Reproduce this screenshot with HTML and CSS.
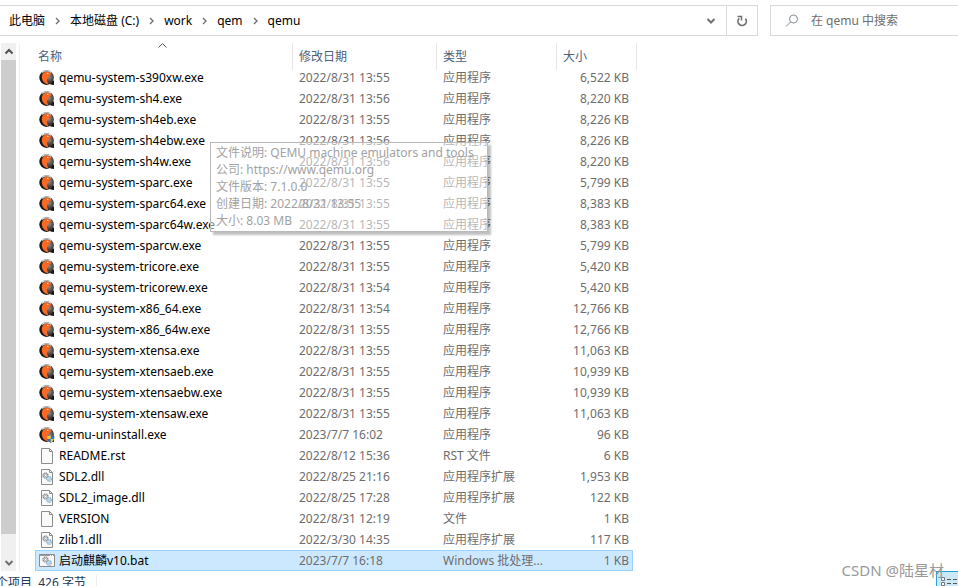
FILE: index.html
```html
<!DOCTYPE html>
<html lang="zh-CN">
<head>
<meta charset="utf-8">
<title>qemu</title>
<link rel="stylesheet" href="styles.css">
</head>
<body>
<svg class="symbols" aria-hidden="true">
  <defs>
    <radialGradient id="ball" cx=".65" cy=".45" r=".6"><stop offset="0" stop-color="#96908d"/><stop offset=".5" stop-color="#4d4846"/><stop offset="1" stop-color="#151313"/></radialGradient>
    <symbol id="qemu" viewBox="0 0 16 16">
      <path d="M10 10.5h5v4.500l-3.500-.5z" fill="#171515"/>
      <circle cx="7.600" cy="7.600" r="7.300" fill="url(#ball)"/>
      <path d="M3 2.400Q7.500-.8 12.200 2.400" fill="none" stroke="#d9d6d4" stroke-width="1.300"/>
      <path d="M3.600 4C5 1.500 8.800 1 10.400 2.600L13 4.300l-2.800.6C10.500 7 8.400 7.800 8 9.600c-.2 1.600.6 3 1.500 4.600C6 13.800 3.800 11.900 3.200 9.200 2.700 7 2.800 5.500 3.600 4z" fill="#fa6a24"/>
      <circle cx="8.800" cy="3.400" r=".6" fill="#fff"/>
    </symbol>
    <symbol id="uninstall" viewBox="0 0 16 16">
      <use href="#qemu"/>
      <path d="M8 9q2.200 0 3.700-1 1.500 1 3.800 1 0 5-3.800 7Q8 14 8 9z" fill="#2676c4"/>
      <path d="M11.700 8v4H8.300Q8 11 8 9q2.200 0 3.700-1zM11.700 12h3.300q-.8 2.700-3.300 4z" fill="#f6c63a"/>
    </symbol>
    <symbol id="page" viewBox="0 0 16 16">
      <path d="M2.500.5h8l3 3v12h-11z" fill="#fafafa" stroke="#8c8c8c"/>
      <path d="M10.500.5v3h3" fill="none" stroke="#8c8c8c"/>
    </symbol>
    <symbol id="gears" viewBox="0 0 16 16">
      <circle cx="6.500" cy="6.500" r="2.400" fill="#eee" stroke="#858b90" stroke-width="1.500" stroke-dasharray="1.200 .5"/>
      <circle cx="6.500" cy="6.500" r="1" fill="#fff" stroke="#858b90" stroke-width=".6"/>
      <circle cx="10" cy="10" r="2.200" fill="#e4f2fb" stroke="#7fa9c6" stroke-width="1.400" stroke-dasharray="1.200 .5"/>
      <circle cx="10" cy="10" r=".8" fill="#fff" stroke="#7fa9c6" stroke-width=".5"/>
    </symbol>
    <symbol id="dll" viewBox="0 0 16 16"><use href="#page"/><use href="#gears"/></symbol>
    <symbol id="bat" viewBox="0 0 16 16">
      <path d="M.5 1.500h15v12H.5z" fill="#f7f7f7" stroke="#8c8c8c"/>
      <path d="M1 2.500h14" stroke="#9a9a9a"/>
      <path d="M11 2.500h1m1 0h1" stroke="#fff"/>
      <use href="#gears"/>
    </symbol>
    <symbol id="next" viewBox="0 0 7 8"><path d="M2 1l3 3-3 3" fill="none" stroke="#707070" stroke-width="1.400"/></symbol>
    <symbol id="up" viewBox="0 0 10 8"><path d="M1.500 5.500L5 2l3.500 3.500" fill="none" stroke="#505050" stroke-width="2"/></symbol>
    <symbol id="down" viewBox="0 0 10 8"><path d="M1.500 2L5 5.500 8.500 2" fill="none" stroke="#707070" stroke-width="2"/></symbol>
  </defs>
</svg>

<header class="toolbar">
  <div class="address">
    <nav class="crumbs" aria-label="路径">
      <a href="#">此电脑</a><svg class="next"><use href="#next"/></svg>
      <a href="#">本地磁盘 (C:)</a><svg class="next"><use href="#next"/></svg>
      <a href="#">work</a><svg class="next"><use href="#next"/></svg>
      <a href="#">qem</a><svg class="next"><use href="#next"/></svg>
      <a href="#">qemu</a>
    </nav>
    <button class="tool history" type="button" aria-label="历史"><svg class="arrow"><use href="#down"/></svg></button>
    <button class="tool refresh" type="button" aria-label="刷新">
      <svg class="reload" viewBox="0 0 12 12"><path d="M9.400 3.600A4.200 4.200 0 1 1 3.200 3.300" fill="none" stroke="#707070" stroke-width="1.700"/><path d="M1.500 1.500H5.500V5.500" fill="none" stroke="#707070" stroke-width="1.500"/></svg>
    </button>
  </div>
  <label class="search">
    <svg class="lens" viewBox="0 0 14 14"><circle cx="8.500" cy="5" r="4" fill="none" stroke="#858b95"/><path d="M5.500 8L1 12.500" stroke="#858b95"/></svg>
    <input type="text" placeholder="在 qemu 中搜索" aria-label="搜索">
  </label>
</header>

<main class="browser">
  <div class="scrollbar">
    <button type="button" aria-label="向上"><svg class="arrow"><use href="#up"/></svg></button>
    <div class="track"><div class="thumb"></div></div>
    <button type="button" aria-label="向下"><svg class="arrow"><use href="#down"/></svg></button>
  </div>
  <div class="list">
    <table class="files">
      <colgroup><col class="c-name"><col class="c-date"><col class="c-type"><col class="c-size"><col class="c-end"></colgroup>
      <thead>
        <tr><th>名称<svg class="sort" viewBox="0 0 9 5"><path d="M.5 4.500l4-4 4 4" fill="none" stroke="#555"/></svg></th><th>修改日期</th><th>类型</th><th colspan="2">大小</th></tr>
      </thead>
      <tbody>
        <tr><td><svg><use href="#qemu"/></svg>qemu-system-s390xw.exe</td><td>2022/8/31 13:55</td><td>应用程序</td><td>6,522 KB</td></tr>
        <tr><td><svg><use href="#qemu"/></svg>qemu-system-sh4.exe</td><td>2022/8/31 13:56</td><td>应用程序</td><td>8,220 KB</td></tr>
        <tr><td><svg><use href="#qemu"/></svg>qemu-system-sh4eb.exe</td><td>2022/8/31 13:55</td><td>应用程序</td><td>8,226 KB</td></tr>
        <tr><td><svg><use href="#qemu"/></svg>qemu-system-sh4ebw.exe</td><td>2022/8/31 13:56</td><td>应用程序</td><td>8,226 KB</td></tr>
        <tr><td><svg><use href="#qemu"/></svg>qemu-system-sh4w.exe</td><td>2022/8/31 13:56</td><td>应用程序</td><td>8,220 KB</td></tr>
        <tr><td><svg><use href="#qemu"/></svg>qemu-system-sparc.exe</td><td>2022/8/31 13:55</td><td>应用程序</td><td>5,799 KB</td></tr>
        <tr><td><svg><use href="#qemu"/></svg>qemu-system-sparc64.exe</td><td>2022/8/31 13:55</td><td>应用程序</td><td>8,383 KB</td></tr>
        <tr><td><svg><use href="#qemu"/></svg>qemu-system-sparc64w.exe</td><td>2022/8/31 13:55</td><td>应用程序</td><td>8,383 KB</td></tr>
        <tr><td><svg><use href="#qemu"/></svg>qemu-system-sparcw.exe</td><td>2022/8/31 13:55</td><td>应用程序</td><td>5,799 KB</td></tr>
        <tr><td><svg><use href="#qemu"/></svg>qemu-system-tricore.exe</td><td>2022/8/31 13:55</td><td>应用程序</td><td>5,420 KB</td></tr>
        <tr><td><svg><use href="#qemu"/></svg>qemu-system-tricorew.exe</td><td>2022/8/31 13:54</td><td>应用程序</td><td>5,420 KB</td></tr>
        <tr><td><svg><use href="#qemu"/></svg>qemu-system-x86_64.exe</td><td>2022/8/31 13:54</td><td>应用程序</td><td>12,766 KB</td></tr>
        <tr><td><svg><use href="#qemu"/></svg>qemu-system-x86_64w.exe</td><td>2022/8/31 13:55</td><td>应用程序</td><td>12,766 KB</td></tr>
        <tr><td><svg><use href="#qemu"/></svg>qemu-system-xtensa.exe</td><td>2022/8/31 13:55</td><td>应用程序</td><td>11,063 KB</td></tr>
        <tr><td><svg><use href="#qemu"/></svg>qemu-system-xtensaeb.exe</td><td>2022/8/31 13:55</td><td>应用程序</td><td>10,939 KB</td></tr>
        <tr><td><svg><use href="#qemu"/></svg>qemu-system-xtensaebw.exe</td><td>2022/8/31 13:55</td><td>应用程序</td><td>10,939 KB</td></tr>
        <tr><td><svg><use href="#qemu"/></svg>qemu-system-xtensaw.exe</td><td>2022/8/31 13:55</td><td>应用程序</td><td>11,063 KB</td></tr>
        <tr><td><svg><use href="#uninstall"/></svg>qemu-uninstall.exe</td><td>2023/7/7 16:02</td><td>应用程序</td><td>96 KB</td></tr>
        <tr><td><svg><use href="#page"/></svg>README.rst</td><td>2022/8/12 15:36</td><td>RST 文件</td><td>6 KB</td></tr>
        <tr><td><svg><use href="#dll"/></svg>SDL2.dll</td><td>2022/8/25 21:16</td><td>应用程序扩展</td><td>1,953 KB</td></tr>
        <tr><td><svg><use href="#dll"/></svg>SDL2_image.dll</td><td>2022/8/25 17:28</td><td>应用程序扩展</td><td>122 KB</td></tr>
        <tr><td><svg><use href="#page"/></svg>VERSION</td><td>2022/8/31 12:19</td><td>文件</td><td>1 KB</td></tr>
        <tr><td><svg><use href="#dll"/></svg>zlib1.dll</td><td>2022/3/30 14:35</td><td>应用程序扩展</td><td>117 KB</td></tr>
        <tr class="selected"><td><svg><use href="#bat"/></svg>启动麒麟v10.bat</td><td>2023/7/7 16:18</td><td>Windows 批处理...</td><td>1 KB</td></tr>
      </tbody>
    </table>
    <div class="tooltip" role="tooltip">
      <div>文件说明: QEMU machine emulators and tools</div>
      <div>公司: https://www.qemu.org</div>
      <div>文件版本: 7.1.0.0</div>
      <div>创建日期: 2022/8/31 13:55</div>
      <div>大小: 8.03 MB</div>
    </div>
  </div>
</main>

<footer class="status">
  <span class="count">个项目&nbsp; 426 字节</span>
  <button class="view" type="button" aria-label="详细信息"><svg viewBox="0 0 22 14"><path d="M4.500 5.500h3v3h-3zM4.500 10.500h3v3h-3z" fill="#fff" stroke="#777"/><path d="M10 7.500h4m2 0h4M10 11.500h4m2 0h4" stroke="#555"/></svg></button>
</footer>
<div class="watermark">CSDN @陆星材</div>
</body>
</html>
```
FILE: styles.css
```css
* { box-sizing: border-box; }
body {
  margin: 0;
  height: 100vh;
  overflow: hidden;
  position: relative;
  background: #fff;
  color: #000;
  font: 12px/16px "Noto Sans", "Noto Sans CJK SC", sans-serif;
}
button { border: 0; padding: 0; margin: 0; background: none; display: flex; align-items: center; justify-content: center; }
svg { display: block; flex: none; }
.symbols { position: absolute; width: 0; height: 0; }

.toolbar { display: flex; gap: 12px; padding-top: 5px; }
.address { flex: 1; display: flex; height: 31px; border: 1px solid #d9d9d9; border-left: 0; }
.crumbs { flex: 1; display: flex; align-items: center; gap: 9px; padding-left: 9px; }
.crumbs a { color: #000; text-decoration: none; white-space: nowrap; }
.next { width: 7px; height: 8px; }
.arrow { width: 10px; height: 8px; }
.tool { width: 30px; }
.refresh { border-left: 1px solid #d9d9d9; width: 31px; }
.reload { width: 12px; height: 12px; }
.search { width: 188px; height: 31px; display: flex; align-items: center; gap: 12px; padding-left: 14px; border: 1px solid #d9d9d9; border-right: 0; }
.lens { width: 14px; height: 14px; }
.search input { flex: 1; min-width: 0; border: 0; padding: 0; outline: 0; background: none; font: inherit; }
.search input::placeholder { color: #6d6d6d; opacity: 1; }

.browser { display: flex; padding-top: 7px; }
.scrollbar { width: 15px; margin-left: 1px; display: flex; flex-direction: column; background: #f0f0f0; }
.scrollbar button { height: 17px; }
.track { flex: 1; }
.thumb { height: 96%; background: #cdcdcd; }
.list { position: relative; flex: 1; margin-left: 3px; padding-left: 15px; border-left: 1px solid #f0f0f0; }

.files { width: 602px; table-layout: fixed; border-collapse: separate; border-spacing: 0; }
.c-name { width: 258px; }
.c-date { width: 144px; }
.c-type { width: 120px; }
.c-size { width: 76px; }
.c-end { width: 4px; }
.files th { position: relative; height: 24px; padding: 3px 0 0 6px; text-align: left; font-weight: 400; color: #4c607a; }
.files th:first-child { padding-left: 3px; }
.files th::after { content: ""; position: absolute; top: 0; right: 0; width: 1px; height: 27px; background: #e5e5e5; }
.sort { position: absolute; top: 0; left: 50%; width: 9px; height: 5px; margin-left: -6px; }
.files td { height: 21px; padding: 0 0 0 6px; color: #6d6d6d; white-space: nowrap; }
.files td:first-child { display: flex; align-items: center; gap: 4px; padding-left: 4px; color: #000; }
.files td:nth-child(4) { padding: 0 4px 0 0; text-align: right; }
.files td svg { width: 16px; height: 16px; }
.selected td { background: #cce8ff; box-shadow: inset 0 1px #99d1ff, inset 0 -1px #99d1ff; }
.selected td:first-child { box-shadow: inset 0 1px #99d1ff, inset 0 -1px #99d1ff, inset 1px 0 #99d1ff; }
.selected td:last-child { box-shadow: inset 0 1px #99d1ff, inset 0 -1px #99d1ff, inset -1px 0 #99d1ff; }

.tooltip {
  position: absolute;
  top: 99px;
  left: 190px;
  padding: 1px 13px 2px 5px;
  border: 1px solid #b9b9b9;
  background: rgba(255, 255, 255, .5);
  box-shadow: 3px 3px 2px rgba(0, 0, 0, .25);
  color: #a2a2a2;
  line-height: 17px;
  white-space: nowrap;
}

.status { display: flex; justify-content: space-between; height: 22px; color: #1e395b; }
.count { margin: 4px 0 0 -4px; padding-right: 10px; border-right: 1px solid #eee; white-space: pre; }
.view { width: 22px; height: 22px; align-items: flex-start; border: 1px solid #26a0da; border-right: 0; background: #cbe8f6; }
.view svg { width: 22px; height: 14px; }
.watermark { position: absolute; right: 14px; bottom: 6px; color: #999; font-size: 15px; line-height: 20px; }
```
